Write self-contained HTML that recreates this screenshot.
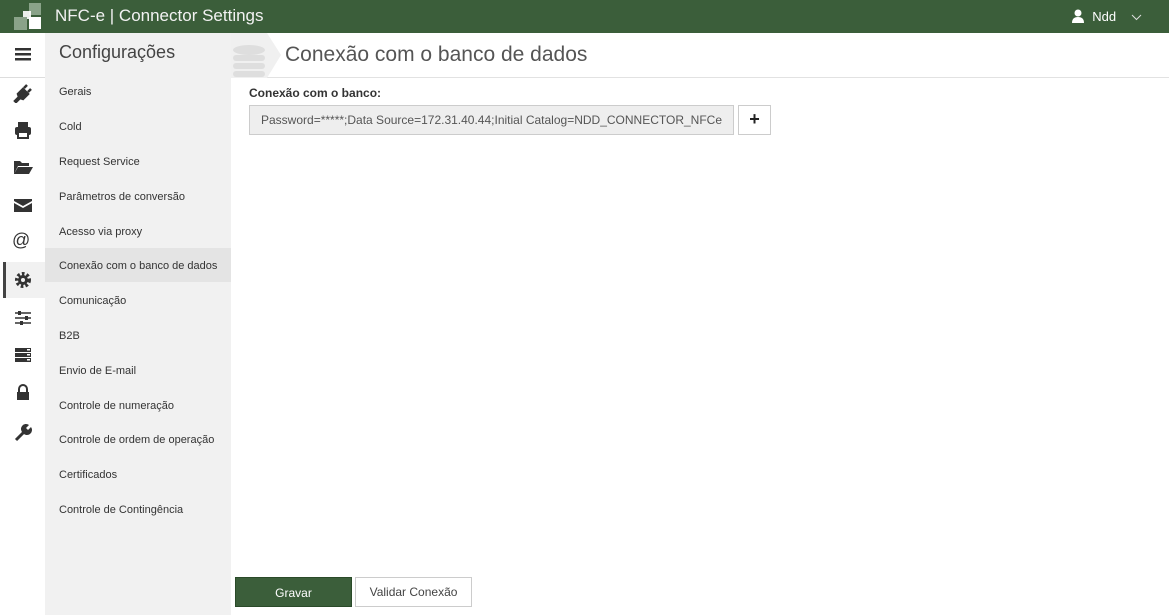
<!DOCTYPE html>
<html><head><meta charset="utf-8"><style>
*{margin:0;padding:0;box-sizing:border-box}
body{width:1169px;height:615px;overflow:hidden;background:#fff;font-family:"Liberation Sans",sans-serif;color:#333;position:relative}
.top{position:absolute;left:0;top:0;width:1169px;height:33px;background:#3b5e3a;color:#fff}
.top .t{position:absolute;left:55px;top:6px;font-size:17px;color:#f2f2f2}
.logo{position:absolute;left:14px;top:3px}
.user{position:absolute;left:1071px;top:9px;font-size:13px;color:#fff}
.icons{position:absolute;left:0;top:33px;width:45px;height:582px;background:#fff}
.menu{position:absolute;left:45px;top:33px;width:186px;height:582px;background:#f1f1f1}
.menu h2{font-weight:normal;font-size:18px;color:#444;position:absolute;left:14px;top:9px}
.mi{position:absolute;left:0;width:186px;height:34px;font-size:11px;color:#333;padding:10px 0 0 14px}
.mi.a{background:#e4e4e4}
.ic{position:absolute;left:12px;width:22px;height:20px}
.ph{position:absolute;left:231px;top:33px;width:938px;height:45px;border-bottom:1px solid #e2e2e2}
.ph h1{position:absolute;left:54px;top:10px;font-size:21px;font-weight:normal;color:#555}
label{position:absolute;left:249px;top:86px;font-size:12px;font-weight:bold;color:#333}
.inp{position:absolute;left:249px;top:105px;width:485px;height:30px;background:#eee;border:1px solid #ccc;font-size:12px;color:#555;padding:7px 0 0 11px;white-space:nowrap;overflow:hidden}
.plus{position:absolute;left:738px;top:105px;width:33px;height:30px;border:1px solid #ccc;background:#fff;font-weight:bold;font-size:18px;text-align:center;line-height:27px;color:#222}
.b1{position:absolute;left:235px;top:577px;width:117px;height:30px;background:#3b5e3a;color:#fff;font-size:12px;text-align:center;line-height:30px;border:1px solid #2a4a29}
.b2{position:absolute;left:355px;top:577px;width:117px;height:30px;background:#fff;border:1px solid #ccc;color:#444;font-size:12px;text-align:center;line-height:28px}
</style></head><body>
<div class="top">
<svg class="logo" width="28" height="27"><rect x="15" y="0" width="12" height="12" fill="#8aa389"/><rect x="9" y="8" width="8" height="8" fill="#fff" opacity=".9"/><rect x="0" y="14" width="13" height="13" fill="#8aa389"/><rect x="15" y="14" width="12" height="12" fill="#fff"/></svg>
<div class="t">NFC-e | Connector Settings</div>
<div class="user"><svg width="14" height="14" style="vertical-align:-2px"><circle cx="7" cy="4" r="3.5" fill="#fff"/><path d="M1 14 Q1 8 7 8 Q13 8 13 14Z" fill="#fff"/></svg>&nbsp;&nbsp;Ndd&nbsp;&nbsp;&nbsp;&nbsp;<svg width="11" height="7"><path d="M1 1 L5.5 5.5 L10 1" stroke="#ddd" fill="none"/></svg></div>
</div>
<div class="icons">
<svg class="ic" style="top:11px" viewBox="0 0 22 20"><rect x="3" y="4" width="16" height="2.5" fill="#333"/><rect x="3" y="9" width="16" height="2.5" fill="#333"/><rect x="3" y="14" width="16" height="2.5" fill="#333"/></svg>
<div style="position:absolute;left:0;top:44px;width:45px;height:1px;background:#ddd"></div>
<svg class="ic" style="top:50px" viewBox="0 0 22 20"><path d="M3 18 L7 14 L6 11 L11 6 L16 11 L11 16 L8 15 L4 19Z M12 5 L15 2 M16 9 L19 6" stroke="#333" stroke-width="2.5" fill="#333"/></svg>
<svg class="ic" style="top:87px" viewBox="0 0 22 20"><rect x="6" y="2" width="10" height="5" fill="#333"/><rect x="3" y="7" width="16" height="8" rx="2" fill="#333"/><rect x="6" y="12" width="10" height="6" fill="#fff" stroke="#333" stroke-width="2"/></svg>
<svg class="ic" style="top:124px" viewBox="0 0 22 20"><path d="M2 4 H8 L10 6 H17 V9 H6 L2 17Z M6 10 H21 L17 17 H2Z" fill="#333"/></svg>
<svg class="ic" style="top:162px" viewBox="0 0 22 20"><path d="M2 4 H20 V6 L11 11 L2 6Z M2 8 L11 13 L20 8 V17 H2Z" fill="#333"/></svg>
<div style="position:absolute;left:12px;top:197px;font-size:18px;color:#333">@</div>
<div style="position:absolute;left:3px;top:229px;width:42px;height:36px;background:#f1f1f1;border-left:3px solid #444"></div>
<svg class="ic" style="top:237px" viewBox="0 0 22 20"><circle cx="11" cy="10" r="6" fill="none" stroke="#333" stroke-width="4" stroke-dasharray="2.5 2"/><circle cx="11" cy="10" r="5" fill="#333"/><circle cx="11" cy="10" r="2" fill="#f1f1f1"/></svg>
<svg class="ic" style="top:275px" viewBox="0 0 22 20"><path d="M3 5 H19 M3 10 H19 M3 15 H19" stroke="#333" stroke-width="1.5"/><rect x="6" y="3" width="3" height="4" fill="#333"/><rect x="13" y="8" width="3" height="4" fill="#333"/><rect x="8" y="13" width="3" height="4" fill="#333"/></svg>
<svg class="ic" style="top:312px" viewBox="0 0 22 20"><rect x="3" y="3" width="16" height="4" fill="#333"/><rect x="3" y="8" width="16" height="4" fill="#333"/><rect x="3" y="13" width="16" height="4" fill="#333"/><rect x="15" y="4" width="3" height="1.5" fill="#fff"/><rect x="15" y="9" width="3" height="1.5" fill="#fff"/><rect x="15" y="14" width="3" height="1.5" fill="#fff"/></svg>
<svg class="ic" style="top:350px" viewBox="0 0 22 20"><path d="M7 9 V6 A4 4 0 0 1 15 6 V9" stroke="#333" stroke-width="2" fill="none"/><rect x="5" y="9" width="12" height="8" fill="#333"/></svg>
<svg class="ic" style="top:389px" viewBox="0 0 22 20"><path d="M4 18 L12 10" stroke="#333" stroke-width="3"/><path d="M11 11 A5 5 0 0 1 17 3 L14 6 L16 8 L19 5 A5 5 0 0 1 11 11Z" fill="#333"/></svg>
</div>
<div class="menu">
<h2>Configurações</h2>
<div class="mi" style="top:43px">Gerais</div>
<div class="mi" style="top:78px">Cold</div>
<div class="mi" style="top:113px">Request Service</div>
<div class="mi" style="top:148px">Parâmetros de conversão</div>
<div class="mi" style="top:183px">Acesso via proxy</div>
<div class="mi a" style="top:215px;padding-top:12px">Conexão com o banco de dados</div>
<div class="mi" style="top:252px">Comunicação</div>
<div class="mi" style="top:287px">B2B</div>
<div class="mi" style="top:322px">Envio de E-mail</div>
<div class="mi" style="top:357px">Controle de numeração</div>
<div class="mi" style="top:391px">Controle de ordem de operação</div>
<div class="mi" style="top:426px">Certificados</div>
<div class="mi" style="top:461px">Controle de Contingência</div>
</div>
<div class="ph">
<svg style="position:absolute;left:0;top:0" width="52" height="45"><path d="M0 0 H36 L50 22 L36 45 H0Z" fill="#f0f0f0"/><g fill="#dedede"><ellipse cx="18" cy="17" rx="16" ry="5"/><rect x="2" y="22" width="32" height="6" rx="3"/><rect x="2" y="30" width="32" height="6" rx="3"/><rect x="2" y="38" width="32" height="6" rx="3"/></g></svg>
<h1>Conexão com o banco de dados</h1>
</div>
<label>Conexão com o banco:</label>
<div class="inp">Password=*****;Data Source=172.31.40.44;Initial Catalog=NDD_CONNECTOR_NFCe</div>
<div class="plus">+</div>
<div class="b1">Gravar</div>
<div class="b2">Validar Conexão</div>
</body></html>
